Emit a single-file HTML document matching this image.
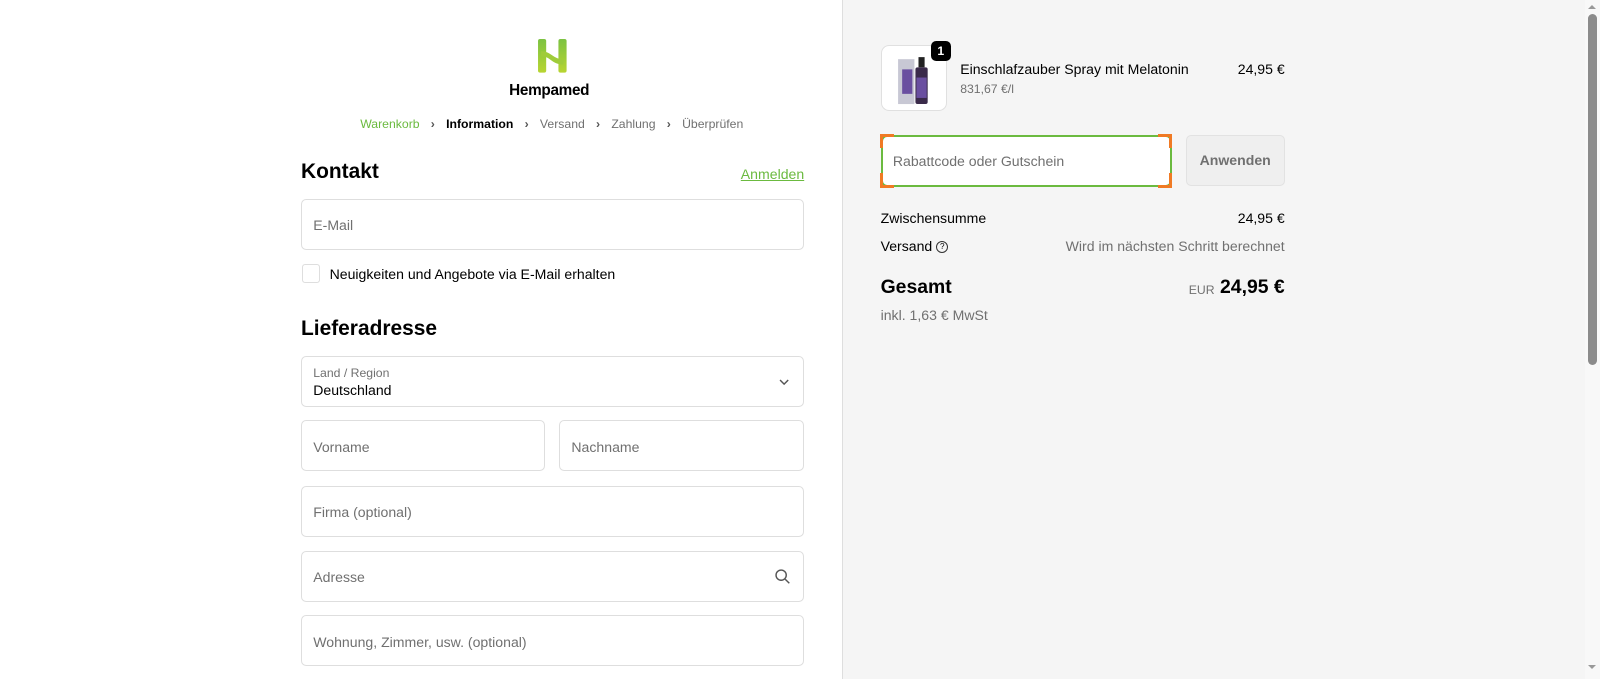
<!DOCTYPE html>
<html><head><meta charset="utf-8"><style>
html,body{margin:0;padding:0;width:1600px;height:679px;overflow:hidden;background:#fff}
#w{zoom:1.0204;width:1568px;height:665px;position:relative;font-family:"Liberation Sans",sans-serif;color:#000;overflow:hidden}
.a{position:absolute}
.right{left:825px;top:0;width:728px;height:665px;background:#f5f5f5;border-left:1px solid #dedede}
.f{position:absolute;border:1px solid #dedede;border-radius:5px;background:#fff;box-sizing:border-box;height:50px}
.f span{position:absolute;left:11px;top:17px;font-size:13.8px;color:#707070}
.sb{left:1553px;top:0;width:15px;height:665px;background:#f8f8f8}
.c{position:absolute;width:14px;height:3px;background:#f07a24}
.cv{position:absolute;width:3px;height:14px;background:#f07a24}
.br{margin:0 11px;font-weight:bold;color:#555}
</style></head><body><div id="w">
<svg class="a" style="left:526px;top:37px" width="30" height="35" viewBox="0 0 30 35">
<defs><linearGradient id="g" x1="0" y1="0" x2="0" y2="1"><stop offset="0" stop-color="#7cc242"/><stop offset="1" stop-color="#b8d531"/></linearGradient></defs>
<rect x="1" y="1" width="8" height="33" rx="2" fill="url(#g)"/><rect x="21" y="1" width="8" height="33" rx="2" fill="url(#g)"/>
<path d="M4 13 C14 13 16 21 26 21 V26 C14 26 14 18 4 18Z" fill="#9fcc3a"/></svg>
<div class="a" style="left:499px;top:80px;font-size:15px;font-weight:bold;letter-spacing:-0.3px">Hempamed</div>
<div class="a" style="left:353px;top:115px;font-size:12px;color:#707070;white-space:nowrap">
<span style="color:#6bba3f">Warenkorb</span><span class="br">›</span><b style="color:#000">Information</b><span class="br">›</span>Versand<span class="br">›</span>Zahlung<span class="br">›</span>Überprüfen</div>
<div class="a" style="left:295px;top:157px;font-size:20.5px;font-weight:bold">Kontakt</div>
<div class="a" style="left:726px;top:163px;font-size:13.8px;color:#6bba3f;text-decoration:underline">Anmelden</div>
<div class="f" style="left:295px;top:195px;width:493px"><span>E-Mail</span></div>
<div class="a" style="left:296px;top:259px;width:16px;height:16px;border:1px solid #dedede;border-radius:3px;background:#fff"></div>
<div class="a" style="left:323px;top:261px;font-size:13.8px">Neuigkeiten und Angebote via E-Mail erhalten</div>
<div class="a" style="left:295px;top:311px;font-size:20.5px;font-weight:bold">Lieferadresse</div>
<div class="f" style="left:295px;top:349px;width:493px"><span style="top:9px;font-size:12px">Land / Region</span><span style="top:24px;color:#000;font-size:13.8px">Deutschland</span>
<svg class="a" style="left:466px;top:20px" width="12" height="8"><path d="M2 2l4 4 4-4" stroke="#555" stroke-width="1.4" fill="none"/></svg></div>
<div class="f" style="left:295px;top:412px;width:239px"><span>Vorname</span></div>
<div class="f" style="left:548px;top:412px;width:240px"><span>Nachname</span></div>
<div class="f" style="left:295px;top:476px;width:493px"><span>Firma (optional)</span></div>
<div class="f" style="left:295px;top:540px;width:493px"><span>Adresse</span>
<svg class="a" style="left:463px;top:16px" width="16" height="16"><circle cx="7" cy="7" r="5" stroke="#555" stroke-width="1.4" fill="none"/><path d="M11 11l4 4" stroke="#555" stroke-width="1.4"/></svg></div>
<div class="f" style="left:295px;top:603px;width:493px"><span>Wohnung, Zimmer, usw. (optional)</span></div>
<div class="a right"></div>
<div class="a" style="left:863px;top:44px;width:63px;height:63px;border:1px solid #e0e0e0;border-radius:8px;background:#fff"></div>
<svg class="a" style="left:876px;top:50px" width="40" height="55"><rect x="4" y="8" width="16" height="44" fill="#c8c8d4"/><rect x="8" y="18" width="10" height="24" fill="#6a4fa0"/><rect x="24" y="6" width="6" height="10" fill="#222"/><rect x="21" y="16" width="12" height="36" rx="2" fill="#3a2a4a"/><rect x="22" y="26" width="10" height="20" fill="#6a4fa0"/></svg>
<div class="a" style="left:912px;top:40px;width:20px;height:20px;background:#000;color:#fff;border-radius:5px;font-size:12px;font-weight:bold;text-align:center;line-height:20px">1</div>
<div class="a" style="left:941px;top:60px;font-size:13.8px">Einschlafzauber Spray mit Melatonin</div>
<div class="a" style="left:941px;top:80px;font-size:12px;color:#707070">831,67 €/l</div>
<div class="a" style="left:1213px;top:60px;font-size:13.8px">24,95 €</div>
<div class="a" style="left:863px;top:132px;width:286px;height:51px;box-sizing:border-box;border:2px solid #6bba3f;border-radius:6px;background:#fff"></div>
<div class="c" style="left:862px;top:131px"></div><div class="cv" style="left:862px;top:131px"></div>
<div class="c" style="left:1135px;top:131px"></div><div class="cv" style="left:1146px;top:131px"></div>
<div class="c" style="left:862px;top:181px"></div><div class="cv" style="left:862px;top:170px"></div>
<div class="c" style="left:1135px;top:181px"></div><div class="cv" style="left:1146px;top:170px"></div>
<div class="a" style="left:875px;top:150px;font-size:13.8px;color:#707070">Rabattcode oder Gutschein</div>
<div class="a" style="left:1162px;top:132px;width:97px;height:50px;box-sizing:border-box;border:1px solid #e2e2e2;border-radius:5px;background:#efefef;font-size:13.8px;font-weight:bold;color:#707070;text-align:center;line-height:48px">Anwenden</div>
<div class="a" style="left:863px;top:206px;font-size:13.8px">Zwischensumme</div>
<div class="a" style="left:1213px;top:206px;font-size:13.8px">24,95 €</div>
<div class="a" style="left:863px;top:233px;font-size:13.8px">Versand <span style="display:inline-block;width:10px;height:10px;border:1px solid #333;border-radius:50%;font-size:8px;text-align:center;line-height:10px;vertical-align:middle">?</span></div>
<div class="a" style="right:309px;top:233px;font-size:13.8px;color:#707070">Wird im nächsten Schritt berechnet</div>
<div class="a" style="left:863px;top:270px;font-size:19px;font-weight:bold">Gesamt</div>
<div class="a" style="left:1165px;top:277px;font-size:12px;color:#707070">EUR</div>
<div class="a" style="right:309px;top:270px;font-size:19px;font-weight:bold">24,95 €</div>
<div class="a" style="left:863px;top:301px;font-size:13.8px;color:#707070">inkl. 1,63 € MwSt</div>
<div class="a sb"></div>
<div class="a" style="left:1556px;top:14px;width:9px;height:344px;background:#8b8b8b;border-radius:5px"></div>
<div class="a" style="left:1556px;top:5px;width:0;height:0;border:4px solid transparent;border-bottom-color:#999;border-top:0"></div>
<div class="a" style="left:1556px;top:652px;width:0;height:0;border:4px solid transparent;border-top-color:#999;border-bottom:0"></div>
</div></body></html>
